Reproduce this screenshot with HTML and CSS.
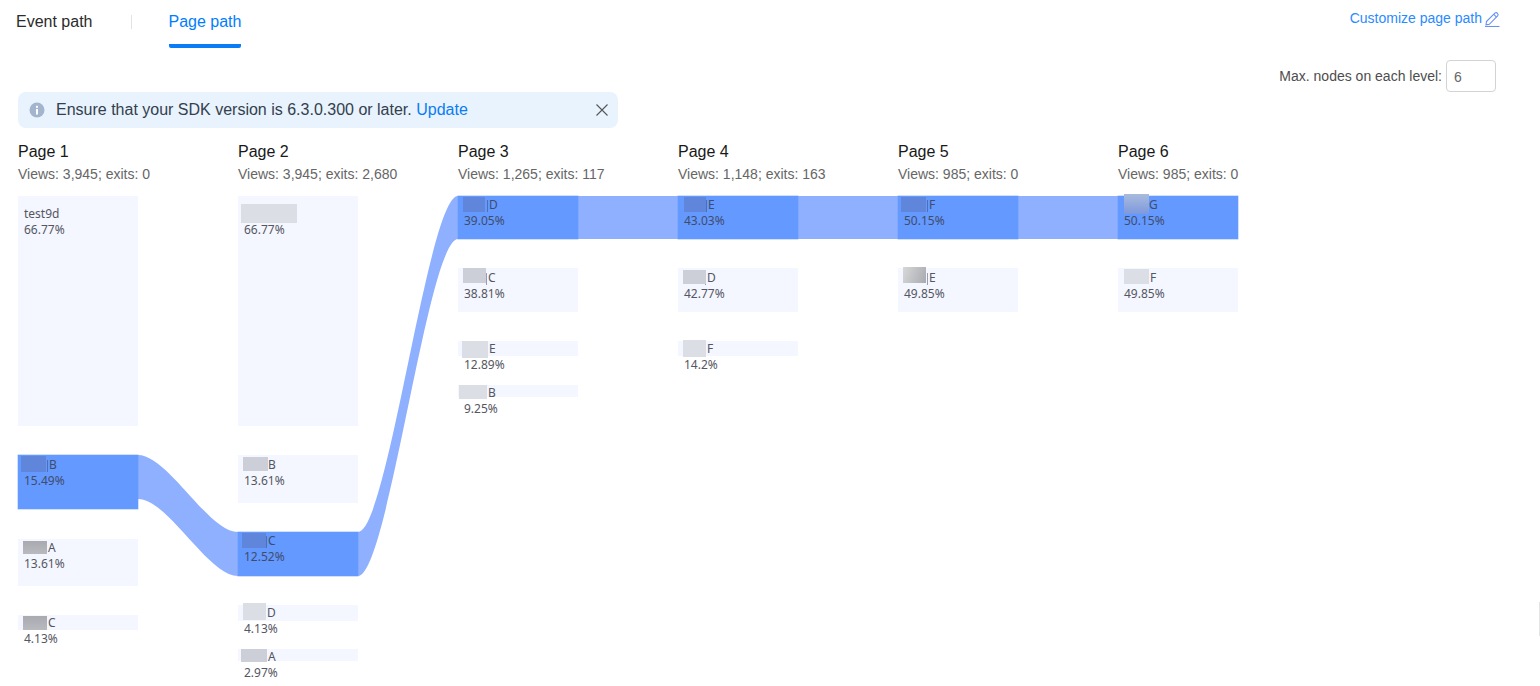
FILE: index.html
```html
<!DOCTYPE html>
<html>
<head>
    <meta charset="utf-8">
    <title>Page path</title>
    <link rel="stylesheet" href="styles.css">
</head>
<body>
    <div class="top-bar">
        <div class="tabs">
            <span class="tab">Event path</span>
            <span class="tab-divider"></span>
            <span class="tab tab-active">Page path</span>
        </div>
        <a class="customize">
            Customize page path
            <svg class="pencil" width="16" height="16" viewBox="0 0 16 16" fill="none" stroke="#6a90f2" stroke-width="1.1">
                <path d="M2.5 10.5 L10.8 2.2 Q12.2 1 13.5 2.3 Q14.8 3.6 13.6 5 L5.3 13.3 L2 13.8 Z"/>
                <path d="M9.8 3.4 L12.5 6.1"/>
                <path d="M1 15.5 H15.5"/>
            </svg>
        </a>
    </div>

    <div class="toolbar">
        <label class="max-label">Max. nodes on each level:</label>
        <input class="max-input" value="6">
    </div>

    <div class="alert">
        <svg class="alert-icon" width="16" height="16" viewBox="0 0 16 16">
            <circle cx="8" cy="8" r="7.5" fill="#a3b4cf"/>
            <rect x="7" y="7" width="2" height="5.5" fill="#fff"/>
            <rect x="7" y="3.8" width="2" height="2" fill="#fff"/>
        </svg>
        <span class="alert-text">Ensure that your SDK version is 6.3.0.300 or later. <a class="alert-link">Update</a></span>
        <svg class="alert-close" width="14" height="14" viewBox="0 0 14 14" stroke="#555" stroke-width="1.1">
            <path d="M1.5 1.5 L12.5 12.5 M12.5 1.5 L1.5 12.5"/>
        </svg>
    </div>

    <div class="heads">
        <div class="head"><div class="head-title">Page 1</div><div class="head-stats">Views: 3,945; exits: 0</div></div>
        <div class="head"><div class="head-title">Page 2</div><div class="head-stats">Views: 3,945; exits: 2,680</div></div>
        <div class="head"><div class="head-title">Page 3</div><div class="head-stats">Views: 1,265; exits: 117</div></div>
        <div class="head"><div class="head-title">Page 4</div><div class="head-stats">Views: 1,148; exits: 163</div></div>
        <div class="head"><div class="head-title">Page 5</div><div class="head-stats">Views: 985; exits: 0</div></div>
        <div class="head"><div class="head-title">Page 6</div><div class="head-stats">Views: 985; exits: 0</div></div>
    </div>

    <div class="chart">
        <!-- links between the selected nodes -->
        <svg class="links" width="1240" height="490" fill="#8fb0ff">
            <path d="M120 259 C150 259 190 336 220 336 L220 380 C190 380 150 303 120 303 Z"/>
            <path d="M340 336 C370 336 410 0 440 0 L440 43 C410 43 370 380 340 380 Z"/>
            <rect x="560" y="0" width="100" height="43"/>
            <rect x="780" y="0" width="100" height="43"/>
            <rect x="1000" y="0" width="100" height="43"/>
        </svg>

        <div class="lane">
            <div class="node node-tall" style="top:0;height:230px">
                <div class="name">test9d</div>
                <div class="pct">66.77%</div>
            </div>
            <div class="node node-on node-low" style="top:259px;height:54px">
                <div class="name"><span class="mask blue m-1b"></span><i class="cut"></i>B</div>
                <div class="pct">15.49%</div>
            </div>
            <div class="node" style="top:343px;height:47px">
                <div class="name"><span class="mask grey m-1a"></span>A</div>
                <div class="pct">13.61%</div>
            </div>
            <div class="node node-high" style="top:419px;height:15px">
                <div class="name"><span class="mask grey m-1c"></span>C</div>
                <div class="pct">4.13%</div>
            </div>
        </div>

        <div class="lane">
            <div class="node node-tall" style="top:0;height:230px">
                <div class="name"><span class="mask pale m-2x"></span></div>
                <div class="pct">66.77%</div>
            </div>
            <div class="node node-low" style="top:259px;height:48px">
                <div class="name"><span class="mask light m-2b"></span>B</div>
                <div class="pct">13.61%</div>
            </div>
            <div class="node node-on" style="top:336px;height:44px">
                <div class="name"><span class="mask blue m-2c"></span><i class="cut"></i>C</div>
                <div class="pct">12.52%</div>
            </div>
            <div class="node node-high" style="top:409px;height:16px">
                <div class="name"><span class="mask pale m-2d"></span><i class="cut"></i>D</div>
                <div class="pct">4.13%</div>
            </div>
            <div class="node node-high" style="top:453px;height:12px">
                <div class="name"><span class="mask light m-2a"></span>A</div>
                <div class="pct">2.97%</div>
            </div>
        </div>

        <div class="lane">
            <div class="node node-on" style="top:0;height:43px">
                <div class="name"><span class="mask blue m-3d"></span><i class="cut"></i>D</div>
                <div class="pct">39.05%</div>
            </div>
            <div class="node node-low" style="top:72px;height:44px">
                <div class="name"><span class="mask light m-3c"></span><i class="cut"></i>C</div>
                <div class="pct">38.81%</div>
            </div>
            <div class="node node-high" style="top:145px;height:15px">
                <div class="name"><span class="mask pale m-3e"></span>E</div>
                <div class="pct">12.89%</div>
            </div>
            <div class="node node-high" style="top:189px;height:12px">
                <div class="name"><span class="mask pale m-3b"></span>B</div>
                <div class="pct">9.25%</div>
            </div>
        </div>

        <div class="lane">
            <div class="node node-on" style="top:0;height:43px">
                <div class="name"><span class="mask blue m-4e"></span><i class="cut"></i>E</div>
                <div class="pct">43.03%</div>
            </div>
            <div class="node node-low" style="top:72px;height:44px">
                <div class="name"><span class="mask light m-4d"></span><i class="cut"></i>D</div>
                <div class="pct">42.77%</div>
            </div>
            <div class="node node-high" style="top:145px;height:15px">
                <div class="name"><span class="mask pale m-4f"></span><i class="cut"></i>F</div>
                <div class="pct">14.2%</div>
            </div>
        </div>

        <div class="lane">
            <div class="node node-on" style="top:0;height:43px">
                <div class="name"><span class="mask blue m-5f"></span><i class="cut"></i>F</div>
                <div class="pct">50.15%</div>
            </div>
            <div class="node node-low" style="top:72px;height:44px">
                <div class="name"><span class="mask fade m-5e"></span><i class="cut"></i>E</div>
                <div class="pct">49.85%</div>
            </div>
        </div>

        <div class="lane">
            <div class="node node-on" style="top:0;height:43px">
                <div class="name"><span class="mask sky m-6g"></span>G</div>
                <div class="pct">50.15%</div>
            </div>
            <div class="node node-low" style="top:72px;height:44px">
                <div class="name"><span class="mask pale m-6f"></span>F</div>
                <div class="pct">49.85%</div>
            </div>
        </div>
    </div>

    <div class="edge-mark"></div>
</body>
</html>
```

FILE: styles.css
```css
* {
    box-sizing: border-box;
}

html, body {
    height: 100%;
}

body {
    margin: 0;
    padding: 0 40px 0 18px;
    background: #fff;
    font-family: "Liberation Sans", Arial, sans-serif;
    color: #191919;
    overflow: hidden;
}

.top-bar {
    display: flex;
    justify-content: space-between;
    height: 60px;
    margin-left: -2px;
}

.tabs {
    display: flex;
    align-items: flex-start;
}

.tab {
    font-size: 16px;
    line-height: 22px;
    padding-top: 11px;
    height: 48px;
    color: #2b2b2b;
}

.tab-divider {
    width: 1px;
    height: 14px;
    margin: 15px 37px 0 38px;
    background: #e2e2e2;
}

.tab-active {
    color: #007dff;
    border-bottom: 4px solid #0a7cf5;
    border-radius: 0 0 2px 2px;
}

.customize {
    display: flex;
    align-items: flex-start;
    gap: 2px;
    font-size: 14px;
    line-height: 18px;
    padding-top: 9px;
    color: #2a8aff;
}

.pencil {
    margin-top: 2px;
}

.toolbar {
    display: flex;
    justify-content: flex-end;
    align-items: center;
    gap: 4px;
    height: 32px;
    padding-right: 4px;
}

.max-label {
    font-size: 14px;
    color: #4d4d4d;
}

.max-input {
    width: 50px;
    height: 32px;
    padding: 2px 7px 0;
    border: 1px solid #d3d3d3;
    border-radius: 4px;
    font: 14px "Liberation Sans", Arial, sans-serif;
    color: #666;
}

.alert {
    display: flex;
    align-items: center;
    width: 600px;
    height: 36px;
    padding: 0 9px 0 11px;
    background: #e8f3fd;
    border-radius: 8px;
}

.alert-icon {
    flex-shrink: 0;
}

.alert-text {
    flex: 1;
    margin-left: 11px;
    font-size: 16px;
    color: #33404d;
}

.alert-link {
    color: #0a7cf5;
}

.heads {
    display: flex;
    gap: 100px;
    height: 68px;
    padding-top: 15px;
}

.head {
    width: 120px;
    white-space: nowrap;
}

.head-title {
    font-size: 16px;
    line-height: 18px;
}

.head-stats {
    margin-top: 4px;
    font-size: 14px;
    line-height: 18px;
    color: #666;
}

.chart {
    position: relative;
    display: flex;
    gap: 100px;
    height: 490px;
}

.links {
    position: absolute;
    left: 0;
    top: 0;
}

.lane {
    position: relative;
    width: 120px;
}

.node {
    position: absolute;
    left: 0;
    width: 100%;
    padding: 1px 0 0 6px;
    background: #f4f7ff;
    font-family: "Noto Sans", sans-serif;
    font-size: 12px;
    line-height: 16px;
    color: #55565f;
}

.node-tall {
    padding-top: 10px;
}

.node-low {
    padding-top: 2px;
}

.node-high {
    padding-top: 0;
}

.node-on {
    background: #6499ff;
    color: #414c6b;
    box-shadow: 0 0 0 0.5px rgba(100, 153, 255, 0.6);
}

.name {
    display: flex;
    align-items: flex-start;
    height: 16px;
}

.mask {
    flex-shrink: 0;
    filter: blur(0.5px);
}

/* leftover stroke of the name, next to the blur */
.cut {
    flex-shrink: 0;
    width: 1px;
    height: 12px;
    margin: 3px 1px 0 -2px;
    background: rgba(60, 70, 95, 0.5);
}

/* colours of the blurred-out name parts */
.blue  { background: #5f86db; }
.grey  { background: linear-gradient(#a8aaaf, #b9babf); }
.light { background: #cccfd7; }
.pale  { background: #dcdee5; }
.fade  { background: linear-gradient(110deg, #d8d8d8, #a8aab0); }
.sky   { background: linear-gradient(#a9bbdc, #7d99de); }

/* size and place of each one, relative to its label */
.m-1b { width: 25px; height: 16px; margin: -1px 3px 0 -3px; }
.m-1a { width: 24px; height: 13px; margin: 1px 1px 0 -1px; }
.m-1c { width: 24px; height: 14px; margin: 1px 1px 0 -1px; }
.m-2x { width: 56px; height: 19px; margin: -2px 0 0 -3px; }
.m-2b { width: 25px; height: 14px; margin: 0 0 0 -1px; }
.m-2c { width: 24px; height: 15px; margin: 0 2px 0 -2px; }
.m-2d { width: 23px; height: 17px; margin: -2px 1px 0 -1px; }
.m-2a { width: 26px; height: 13px; margin: 0 1px 0 -3px; }
.m-3d { width: 22px; height: 15px; margin: 0 4px 0 -1px; }
.m-3c { width: 23px; height: 15px; margin: -2px 2px 0 -1px; }
.m-3e { width: 26px; height: 17px; margin: 0 1px 0 -2px; }
.m-3b { width: 28px; height: 14px; margin: 0 1px 0 -5px; }
.m-4e { width: 22px; height: 15px; margin: 0 2px 0 0; }
.m-4d { width: 23px; height: 14px; margin: 0 1px 0 -1px; }
.m-4f { width: 23px; height: 17px; margin: -1px 1px 0 -1px; }
.m-5f { width: 25px; height: 15px; margin: 0 3px 0 -3px; }
.m-5e { width: 23px; height: 16px; margin: -3px 3px 0 -1px; }
.m-6g { width: 25px; height: 20px; margin: -3px 0 0 0; }
.m-6f { width: 25px; height: 15px; margin: -1px 1px 0 0; }

/* sliver of something cut off at the window edge */
.edge-mark {
    position: absolute;
    right: 0;
    top: 602px;
    width: 1px;
    height: 34px;
    background: #e4e4e4;
}
```
